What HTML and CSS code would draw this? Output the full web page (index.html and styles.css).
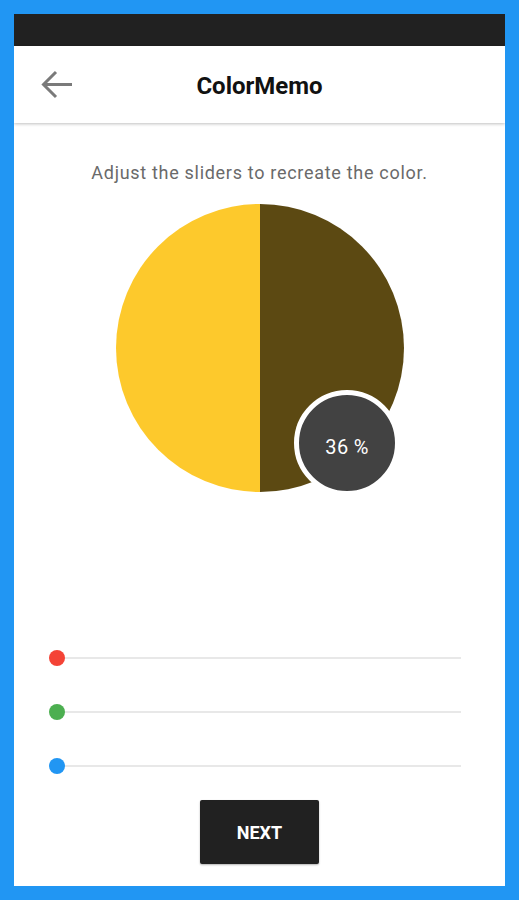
FILE: index.html
```html
<!DOCTYPE html>
<html>
<head>
<meta charset="utf-8">
<link rel="stylesheet" href="styles.css">
</head>
<body>
<div class="phone">
  <div class="status"></div>
  <header class="appbar">
    <svg class="back" width="36" height="32" viewBox="0 0 36 32">
      <path d="M33 15.5H5 M17 3L4.5 15.5L17 28" fill="none" stroke="#7a7a7a" stroke-width="3" stroke-linecap="butt" stroke-linejoin="miter"/>
    </svg>
    <h1 class="title">ColorMemo</h1>
  </header>
  <main class="content">
    <p class="hint">Adjust the sliders to recreate the color.</p>
    <div class="compare">
      <div class="badge">36 %</div>
    </div>
    <div class="sliders">
      <div class="slider"><span class="dot red"></span><span class="track"></span></div>
      <div class="slider"><span class="dot green"></span><span class="track"></span></div>
      <div class="slider"><span class="dot blue"></span><span class="track"></span></div>
    </div>
    <button class="next">NEXT</button>
  </main>
</div>
</body>
</html>
```
FILE: styles.css
```css
* { box-sizing: border-box; }
html, body { margin: 0; padding: 0; }
body {
  background: #2196f3;
  width: 519px;
  height: 900px;
  padding: 14px;
  font-family: Roboto, "Noto Sans", sans-serif;
}
.phone {
  width: 491px;
  height: 872px;
  background: #ffffff;
  display: flex;
  flex-direction: column;
  overflow: hidden;
}
.status {
  height: 32px;
  background: #212121;
  flex: none;
}
.appbar {
  height: 77px;
  flex: none;
  display: flex;
  align-items: center;
  position: relative;
  background: #fff;
  box-shadow: 0 1px 3px rgba(0,0,0,0.25);
  z-index: 1;
}
.back {
  position: absolute;
  left: 25px;
  top: 23px;
}
.title {
  margin: 0;
  width: 100%;
  text-align: center;
  font-size: 24px;
  font-weight: 700;
  color: #111;
  line-height: 28px;
  padding-top: 2px;
}
.content {
  flex: 1;
  display: flex;
  flex-direction: column;
  align-items: center;
}
.hint {
  margin: 40px 0 0;
  line-height: 20px;
  font-size: 18px;
  color: #6a6a6a;
  letter-spacing: 0.7px;
}
.compare {
  margin-top: 21px;
  width: 288px;
  height: 288px;
  border-radius: 50%;
  background: linear-gradient(to right, #fdc92c 50%, #5c4912 50%);
  position: relative;
  margin-left: 1px;
}
.badge {
  position: absolute;
  left: 178px;
  top: 186px;
  width: 106px;
  height: 106px;
  border-radius: 50%;
  border: 5px solid #fff;
  background: #424242;
  color: #fff;
  font-size: 20px;
  letter-spacing: 0.3px;
  display: flex;
  align-items: center;
  justify-content: center;
  padding-top: 8px;
}
.sliders {
  margin-top: 158px;
  width: 100%;
  display: flex;
  flex-direction: column;
  gap: 38px;
  padding: 0 44px 0 35px;
}
.slider {
  height: 16px;
  display: flex;
  align-items: center;
  position: relative;
}
.track {
  flex: 1;
  height: 2px;
  background: #e8e8e8;
  margin-left: -8px;
}
.dot {
  width: 16px;
  height: 16px;
  border-radius: 50%;
  flex: none;
  position: relative;
  z-index: 1;
}
.red { background: #f44336; }
.green { background: #4caf50; }
.blue { background: #2196f3; }
.next {
  margin-top: 26px;
  width: 119px;
  height: 64px;
  background: #212121;
  color: #fff;
  border: none;
  border-radius: 2px;
  font-family: Roboto, sans-serif;
  font-weight: 700;
  font-size: 18px;
  box-shadow: 0 1px 2px rgba(0,0,0,0.3);
}
```
